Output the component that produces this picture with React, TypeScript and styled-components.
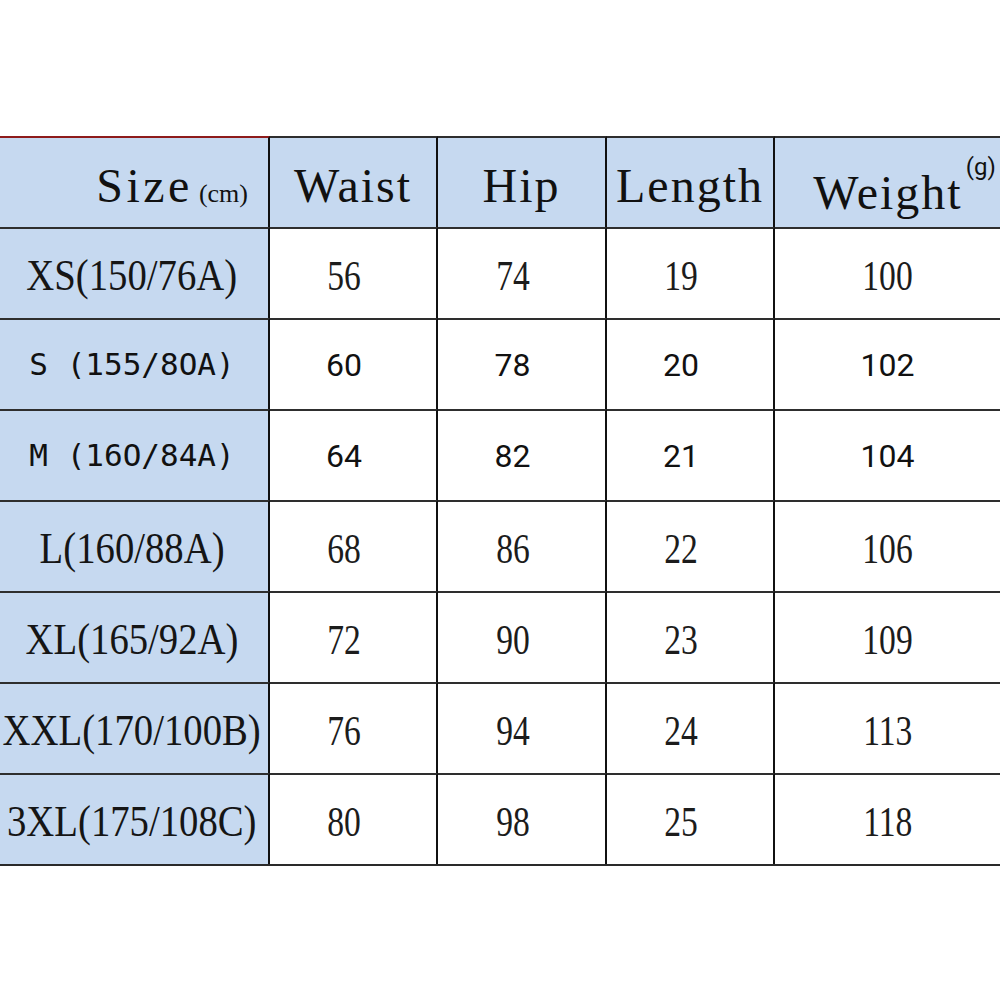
import React from "react";
import styled, { createGlobalStyle } from "styled-components";

const Global = createGlobalStyle`
  html, body { margin: 0; padding: 0; background: #ffffff; }
  body { width: 1000px; height: 1000px; overflow: hidden; }
`;

const Page = styled.div`
  width: 1000px;
  height: 1000px;
  padding-top: 136px;
  box-sizing: border-box;
  background: #ffffff;
`;

const Table = styled.div`
  display: grid;
  grid-template-columns: 270px 168px 169px 168px 225px;
  grid-auto-rows: 91px;
  border-bottom: 2px solid #2a2a2a;
`;

const Cell = styled.div<{ $blue?: boolean; $last?: boolean; $red?: boolean; $pad?: number; $padLeft?: number; $align?: string }>`
  box-sizing: border-box;
  display: flex;
  align-items: center;
  justify-content: ${(p) => p.$align || "center"};
  padding-right: ${(p) => p.$pad ?? 0}px;
  padding-left: ${(p) => p.$padLeft ?? 0}px;
  background: ${(p) => (p.$blue ? "#c6d9f0" : "#ffffff")};
  border-top: 2px solid ${(p) => (p.$red ? "#8e1b1b" : "#2e2e2e")};
  border-right: ${(p) => (p.$last ? "none" : "2px solid #111")};
  color: #111;
  white-space: nowrap;
`;

const HeadText = styled.span<{ $ls?: number }>`
  font-family: "Liberation Serif", "Times New Roman", serif;
  font-size: 48px;
  letter-spacing: ${(p) => p.$ls ?? 2}px;
  line-height: 1;
  color: #111;
  padding-top: 6px;
`;

const Unit = styled.span`
  font-family: "Liberation Serif", "Times New Roman", serif;
  font-size: 26px;
  letter-spacing: 0;
  margin-left: 6px;
`;

const Sup = styled.span`
  font-family: Roboto, "Liberation Sans", sans-serif;
  font-size: 24px;
  letter-spacing: 0;
  vertical-align: 34px;
  margin-left: 3px;
`;

const SerifLabel = styled.span`
  display: inline-block;
  font-family: "Liberation Serif", "Times New Roman", serif;
  font-size: 44px;
  line-height: 1;
  transform: scaleX(0.88);
  color: #151515;
  padding-top: 4px;
`;

const MonoLabel = styled.span`
  display: inline-block;
  font-family: "DejaVu Sans Mono", "Liberation Mono", monospace;
  font-size: 31px;
  line-height: 1;
  color: #111;
`;

const SerifNum = styled.span`
  display: inline-block;
  font-family: "Liberation Serif", "Times New Roman", serif;
  font-size: 42px;
  line-height: 1;
  transform: scaleX(0.8);
  color: #1c1c1c;
  padding-top: 4px;
`;

const SansNum = styled.span`
  display: inline-block;
  font-family: Roboto, "Liberation Sans", sans-serif;
  font-size: 32px;
  font-weight: 400;
  line-height: 1;
  color: #111;
`;

type Row = { label: string; vals: string[]; sans?: boolean };

const rows: Row[] = [
  { label: "XS(150/76A)", vals: ["56", "74", "19", "100"] },
  { label: "S (155/8OA)", vals: ["60", "78", "20", "102"], sans: true },
  { label: "M (16O/84A)", vals: ["64", "82", "21", "104"], sans: true },
  { label: "L(160/88A)", vals: ["68", "86", "22", "106"] },
  { label: "XL(165/92A)", vals: ["72", "90", "23", "109"] },
  { label: "XXL(170/100B)", vals: ["76", "94", "24", "113"] },
  { label: "3XL(175/108C)", vals: ["80", "98", "25", "118"] },
];

export default function App() {
  return (
    <Page>
      <Global />
      <Table>
        <Cell $blue $red $align="flex-end" $pad={20}>
          <HeadText $ls={3.5}>
            Size<Unit>(cm)</Unit>
          </HeadText>
        </Cell>
        <Cell $blue>
          <HeadText>Waist</HeadText>
        </Cell>
        <Cell $blue>
          <HeadText>Hip</HeadText>
        </Cell>
        <Cell $blue>
          <HeadText>Length</HeadText>
        </Cell>
        <Cell $blue $last $padLeft={34}>
          <HeadText>
            Weight<Sup>(g)</Sup>
          </HeadText>
        </Cell>
        {rows.map((r) => (
          <React.Fragment key={r.label}>
            <Cell $blue $pad={4}>
              {r.sans ? <MonoLabel>{r.label}</MonoLabel> : <SerifLabel>{r.label}</SerifLabel>}
            </Cell>
            {r.vals.map((v, i) => (
              <Cell key={i} $last={i === 3} $pad={i === 3 ? 0 : 18}>
                {r.sans ? <SansNum>{v}</SansNum> : <SerifNum>{v}</SerifNum>}
              </Cell>
            ))}
          </React.Fragment>
        ))}
      </Table>
    </Page>
  );
}
